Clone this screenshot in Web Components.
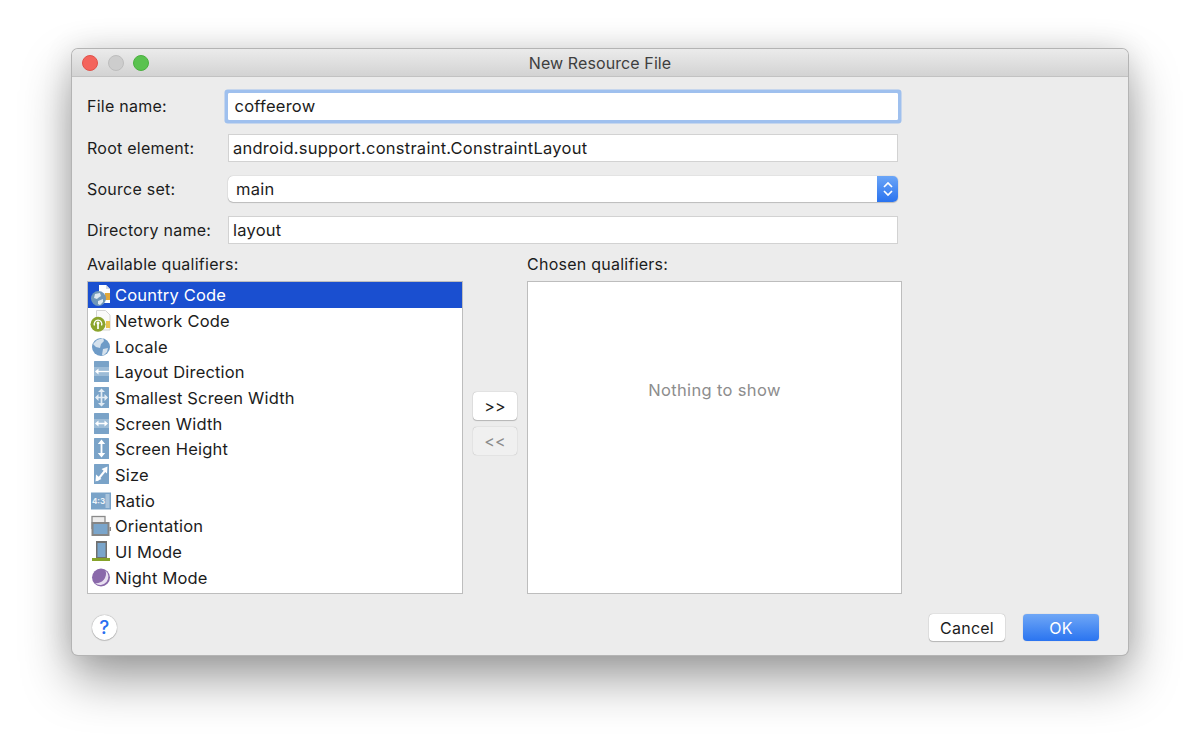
<!DOCTYPE html>
<html>
<head>
<meta charset="utf-8">
<title>New Resource File</title>
<style>
html, body { margin: 0; height: 100%; background: #fff; overflow: hidden; }
body { font-family: Inter, "Liberation Sans", sans-serif; font-size: 16.5px; letter-spacing: .25px; color: #1c1c1c; padding: 49px 0 0 72px; box-sizing: border-box; }
</style>
</head>
<body>
<resource-dialog title="New Resource File">
  <form-row label="File name:" first><text-field value="coffeerow" focused></text-field></form-row>
  <form-row label="Root element:"><text-field value="android.support.constraint.ConstraintLayout"></text-field></form-row>
  <form-row label="Source set:"><select-field value="main"></select-field></form-row>
  <form-row label="Directory name:"><text-field value="layout"></text-field></form-row>
  <qualifier-picker>
    <qualifier-list slot="available">
      <qualifier-item icon="country" selected>Country Code</qualifier-item>
      <qualifier-item icon="network">Network Code</qualifier-item>
      <qualifier-item icon="locale">Locale</qualifier-item>
      <qualifier-item icon="layout">Layout Direction</qualifier-item>
      <qualifier-item icon="smallest">Smallest Screen Width</qualifier-item>
      <qualifier-item icon="width">Screen Width</qualifier-item>
      <qualifier-item icon="height">Screen Height</qualifier-item>
      <qualifier-item icon="size">Size</qualifier-item>
      <qualifier-item icon="ratio">Ratio</qualifier-item>
      <qualifier-item icon="orientation">Orientation</qualifier-item>
      <qualifier-item icon="uimode">UI Mode</qualifier-item>
      <qualifier-item icon="night">Night Mode</qualifier-item>
    </qualifier-list>
  </qualifier-picker>
  <dialog-footer></dialog-footer>
</resource-dialog>

<script>
// all the blue qualifier tiles share this shape, 15x21
const tile = (h = 21) => `<rect x="4" y="0" width="15" height="${h}" rx=".5" fill="#7aa3c8"/>`;
const pale = '#e3ecf4';
const ICONS = {
  country: `<path d="M9 1h7l4 4v14H9z" fill="#fff"/><path d="M16 1l4 4h-4z" fill="#d6dce2"/><rect x="15" y="9" width="5" height="7" fill="#e2a93a"/><circle cx="8.500" cy="14.500" r="7.500" fill="#7097b8"/><path d="M5 10l5-1 1 3-3 2-1 1-3-1zM8 17l5-2 0 3-3 3-2-1z" fill="#dde7ef"/>`,
  network: `<path d="M6.500 .5h9l4.500 4.500v15h-13.500z" fill="#fafafa" stroke="#d4d4d4"/><rect x="16" y="11" width="4" height="7" fill="#e6c34f"/><circle cx="8" cy="14.300" r="7.500" fill="#8ba42c"/><path d="M4.500 15.500a3.800 3.800 0 1 1 7 0" fill="none" stroke="#fff" stroke-width="1.200"/><circle cx="8" cy="13" r="1.500" fill="#fff"/><path d="M8 13v6" stroke="#fff" stroke-width="1.700"/>`,
  locale: `<circle cx="11" cy="11" r="9" fill="#6e9bc7"/><path d="M7 4l6-2 1 3-3 3-1 4-4-1-3-3zM13 13l5-1-1 4-3 3-2 0z" fill="#d4e1ed"/>`,
  layout: `${tile()}<rect x="4" y="6" width="15" height="9" fill="#9dbcd7"/><path d="M8 10.500h11" stroke="#fff" stroke-width="1.300"/><path d="M5 10.500l3.500-3v6z" fill="#fff"/>`,
  smallest: `${tile()}<path d="M11.500 3v15M6 10.500h11" stroke="${pale}" stroke-width="1.700"/><path d="M11.500 1.500l3.500 3.500h-7zM11.500 19.500l3.500-3.500h-7zM5 10.500l3.500-3.500v7zM18 10.500l-3.500-3.500v7z" fill="${pale}"/>`,
  width: `${tile()}<rect x="4" y="6" width="15" height="9" fill="#9dbcd7"/><path d="M7 10.500h9" stroke="#fff" stroke-width="1.500"/><path d="M5 10.500l3.500-3v6zM18 10.500l-3.500-3v6z" fill="#fff"/>`,
  height: `${tile()}<path d="M11.500 4v13" stroke="#fff" stroke-width="1.800"/><path d="M11.500 1.500l3.700 4.500h-7.400zM11.500 19.500l3.700-4.500h-7.400z" fill="#fff"/>`,
  size: `${tile(20)}<path d="M7 16.500L16 5.500" stroke="#fff" stroke-width="2"/><path d="M17.500 2.500l-.5 7-5.500-4.500zM5.500 17.500l.5-7 5.500 4.500z" fill="#fff"/>`,
  ratio: `<rect x="1" y="2.500" width="20" height="17" fill="#7aa3c8"/><rect x="15.500" y="4" width="4" height="14" fill="#a9c4dc"/><text x="8.500" y="14" font-size="8" font-family="Inter" font-weight="700" letter-spacing="0" text-anchor="middle" fill="#eef3f8">4:3</text>`,
  orientation: `<rect x="2" y="1.500" width="13" height="12" fill="#ededed" stroke="#8a8a8a" stroke-width="1.300"/><rect x="1.500" y="7" width="18" height="14" fill="#858585"/><rect x="3.500" y="9" width="14" height="10" fill="#7aa5cb"/><rect x="19.500" y="12" width="1.500" height="4" fill="#858585"/>`,
  uimode: `<rect x="6" y="0" width="11" height="17.500" fill="#6f6f6f"/><rect x="7.500" y="2" width="8" height="14" fill="#7aa5cb"/><rect x="2" y="17" width="18" height="3" fill="#86a32a"/>`,
  night: `<circle cx="11" cy="10.500" r="9" fill="#8a69aa"/><path d="M15.500 3.500a8 8 0 0 1-10.500 12.500 9.500 9.500 0 0 0 10.500-12.500z" fill="#e9e0f1"/>`
};

class ResourceDialog extends HTMLElement {
  connectedCallback() {
    this.attachShadow({ mode: 'open' });
    this.shadowRoot.innerHTML = `
      <style>
        :host {
          display: flex;
          flex-direction: column;
          width: 1056px;
          height: 606px;
          box-sizing: border-box;
          background: #ececec;
          border-radius: 6px;
          box-shadow: 0 0 0 1px #b4b4b4, 0 24px 50px rgba(0,0,0,.38), 0 0 30px rgba(0,0,0,.12);
          overflow: hidden;
        }
        .bar {
          height: 27px;
          flex: none;
          display: flex;
          align-items: center;
          position: relative;
          background: linear-gradient(#ebebeb, #d3d3d3);
          border-bottom: 1px solid #c2c2c2;
          padding-left: 10px;
          gap: 9.5px;
        }
        .bar i { width: 16px; height: 16px; border-radius: 50%; box-sizing: border-box; }
        .r { background: #f4645c; border: 1px solid #e0524a; }
        .g { background: #cdcdcd; border: 1px solid #bdbdbd; }
        .v { background: #5ac24f; border: 1px solid #4bb040; }
        .title { position: absolute; left: 0; right: 0; text-align: center; font-size: 16px; letter-spacing: .1px; color: #3e3e3e; }
        .body { flex: 1; display: flex; flex-direction: column; padding: 8px 29px 14px 15px; }
      </style>
      <div class="bar"><i class="r"></i><i class="g"></i><i class="v"></i><span class="title">${this.getAttribute('title')}</span></div>
      <div class="body"><slot></slot></div>`;
  }
}

class FormRow extends HTMLElement {
  connectedCallback() {
    this.attachShadow({ mode: 'open' });
    this.shadowRoot.innerHTML = `
      <style>
        :host { display: flex; align-items: center; height: 41px; width: 811px; }
        :host([first]) { height: 42px; }
        .label { width: 141px; flex: none; font-size: 16px; }
        .field { flex: 1; display: flex; }
        ::slotted(*) { flex: 1; }
      </style>
      <span class="label">${this.getAttribute('label')}</span>
      <div class="field"><slot></slot></div>`;
  }
}

class TextField extends HTMLElement {
  connectedCallback() {
    this.attachShadow({ mode: 'open' });
    this.shadowRoot.innerHTML = `
      <style>
        :host { display: block; }
        div {
          height: 28px; box-sizing: border-box; line-height: 26px;
          background: #fff; border: 1px solid #d2d2d2; padding-left: 4px;
        }
        :host([focused]) div {
          height: 27px; line-height: 25px;
          border-color: #fff; padding-left: 5.5px;
          box-shadow: 0 0 0 3.500px #9fc0ee; border-radius: 1px;
        }
      </style>
      <div>${this.getAttribute('value')}</div>`;
  }
}

class SelectField extends HTMLElement {
  connectedCallback() {
    this.attachShadow({ mode: 'open' });
    this.shadowRoot.innerHTML = `
      <style>
        :host { display: block; }
        .box {
          height: 26px; box-sizing: border-box; display: flex; background: #fff;
          border-radius: 5px; box-shadow: 0 0 1px rgba(0,0,0,.35), 0 1px 1px rgba(0,0,0,.18);
          overflow: hidden; line-height: 26px;
        }
        span { flex: 1; padding-left: 8px; }
        .step { width: 21px; display: flex; align-items: center; justify-content: center; background: linear-gradient(#6ba5f7, #2a73ef); }
      </style>
      <div class="box"><span>${this.getAttribute('value')}</span>
        <div class="step"><svg width="12" height="18" viewBox="0 0 12 18"><path d="M2 7l4-4 4 4M2 11l4 4 4-4" fill="none" stroke="#fff" stroke-width="1.700"/></svg></div>
      </div>`;
  }
}

class QualifierPicker extends HTMLElement {
  connectedCallback() {
    this.attachShadow({ mode: 'open' });
    this.shadowRoot.innerHTML = `
      <style>
        :host { display: grid; grid-template-columns: 376px 64px 375px; grid-template-rows: 20px 313px; row-gap: 7px; margin-top: 4px; }
        .head { font-size: 16px; }
        .mid { display: flex; flex-direction: column; align-items: center; justify-content: center; gap: 7px; padding-bottom: 29px; box-sizing: border-box; }
        .pane { background: #fff; border: 1px solid #bdbdbd; box-sizing: border-box; }
        .empty { display: flex; align-items: center; justify-content: center; color: #8d8d8d; letter-spacing: .35px; padding-bottom: 96px; }
        .list { min-width: 0; }
      </style>
      <div class="head">Available qualifiers:</div><div></div><div class="head">Chosen qualifiers:</div>
      <div class="list"><slot name="available"></slot></div>
      <div class="mid"><mac-button small>&gt;&gt;</mac-button><mac-button small disabled>&lt;&lt;</mac-button></div>
      <div class="pane empty">Nothing to show</div>`;
  }
}

class QualifierList extends HTMLElement {
  connectedCallback() {
    this.attachShadow({ mode: 'open' });
    this.shadowRoot.innerHTML = `
      <style>
        :host { display: block; height: 313px; box-sizing: border-box; background: #fff; border: 1px solid #bdbdbd; padding-top: .3px; }
      </style>
      <slot></slot>`;
  }
}

class QualifierItem extends HTMLElement {
  connectedCallback() {
    this.attachShadow({ mode: 'open' });
    this.shadowRoot.innerHTML = `
      <style>
        :host { display: flex; align-items: center; height: 25.7px; gap: 3px; padding-left: 2px; letter-spacing: .18px; }
        :host([selected]) { background: #1a4fd0; color: #fff; }
        svg { flex: none; }
      </style>
      <svg width="22" height="22" viewBox="0 0 22 22">${ICONS[this.getAttribute('icon')]}</svg>
      <span><slot></slot></span>`;
  }
}

class MacButton extends HTMLElement {
  connectedCallback() {
    this.attachShadow({ mode: 'open' });
    this.shadowRoot.innerHTML = `
      <style>
        :host {
          display: flex; align-items: center; justify-content: center;
          width: 76px; height: 27px; background: #fff; border-radius: 4px; font-size: 16px;
          box-shadow: 0 0 1px rgba(0,0,0,.4), 0 1px 1px rgba(0,0,0,.2);
        }
        :host([small]) { width: 44px; height: 28px; }
        :host([disabled]) { background: #f0f0f0; color: #8b8b8b; box-shadow: 0 0 1px rgba(0,0,0,.35); }
        :host([primary]) { background: linear-gradient(#6fa7f6, #2a74f0); color: #fff; box-shadow: 0 0 1px rgba(0,0,80,.3); }
      </style>
      <slot></slot>`;
  }
}

class DialogFooter extends HTMLElement {
  connectedCallback() {
    this.attachShadow({ mode: 'open' });
    this.shadowRoot.innerHTML = `
      <style>
        :host { display: flex; align-items: center; margin-top: auto; gap: 18px; height: 27px; }
        .help {
          width: 25px; height: 25px; margin-left: 5px; margin-right: auto; border-radius: 50%; background: #fff;
          display: flex; align-items: center; justify-content: center; color: #2a6ff0; font-size: 19px; font-weight: 500;
          box-shadow: 0 0 1px rgba(0,0,0,.5), 0 1px 1px rgba(0,0,0,.15);
        }
      </style>
      <span class="help">?</span>
      <mac-button>Cancel</mac-button>
      <mac-button primary>OK</mac-button>`;
  }
}

customElements.define('resource-dialog', ResourceDialog);
customElements.define('form-row', FormRow);
customElements.define('text-field', TextField);
customElements.define('select-field', SelectField);
customElements.define('qualifier-picker', QualifierPicker);
customElements.define('qualifier-list', QualifierList);
customElements.define('qualifier-item', QualifierItem);
customElements.define('mac-button', MacButton);
customElements.define('dialog-footer', DialogFooter);
</script>
</body>
</html>
